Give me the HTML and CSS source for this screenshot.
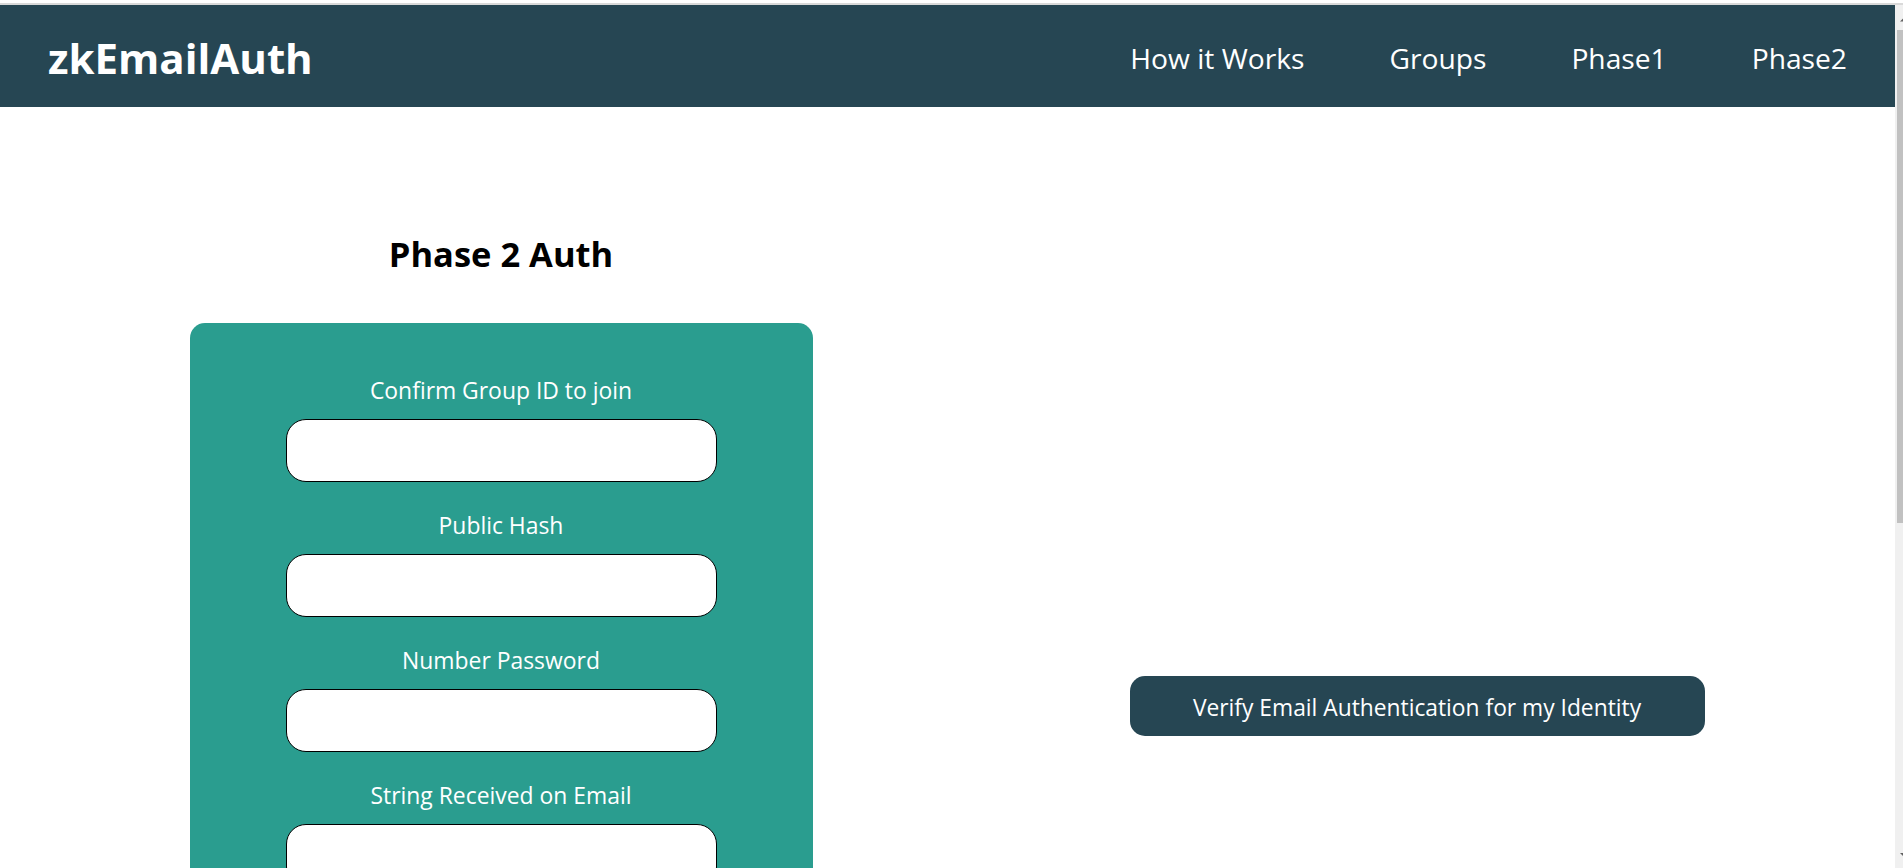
FILE: index.html
```html
<!DOCTYPE html>
<html lang="en">
<head>
<meta charset="utf-8">
<title>zkEmailAuth - Phase 2</title>
<link rel="stylesheet" href="styles.css">
</head>
<body>
<div class="topline"></div>
<div class="window">
  <div class="page">
    <header class="nav">
      <div class="logo">zkEmailAuth</div>
      <nav class="links">
        <a class="link" href="#">How it Works</a>
        <a class="link" href="#">Groups</a>
        <a class="link" href="#">Phase1</a>
        <a class="link" href="#">Phase2</a>
      </nav>
    </header>
    <main class="main">
      <section class="left">
        <h2 class="title">Phase 2 Auth</h2>
        <form class="card">
          <div class="field">
            <label class="label">Confirm Group ID to join</label>
            <input class="input" type="text">
          </div>
          <div class="field">
            <label class="label">Public Hash</label>
            <input class="input" type="text">
          </div>
          <div class="field">
            <label class="label">Number Password</label>
            <input class="input" type="text">
          </div>
          <div class="field">
            <label class="label">String Received on Email</label>
            <input class="input" type="text">
          </div>
        </form>
      </section>
      <section class="right">
        <button class="verify" type="button">Verify Email Authentication for my Identity</button>
      </section>
    </main>
  </div>
  <svg class="scrollbar" width="8" height="863" viewBox="0 0 8 863">
    <rect x="0" y="0" width="8" height="863" fill="#f0f0f0"/>
    <rect x="2" y="25" width="6" height="493" fill="#c1c1c1"/>
    <polygon points="5,16.5 8.5,13 12,16.5" fill="#606060"/>
    <polygon points="5,848 8.5,851.5 12,848" fill="#606060"/>
  </svg>
</div>
</body>
</html>
```

FILE: styles.css
```css
html, body {
  margin: 0;
  padding: 0;
  height: 100%;
  overflow: hidden;
  background: #ffffff;
}

body {
  font-family: "Open Sans", "Noto Sans", "Liberation Sans", sans-serif;
  color: #000;
}

.topline {
  height: 3px;
  background: #ffffff;
  border-bottom: 2px solid #d9d9d9;
}

.window {
  display: flex;
  height: 863px;
}

.page {
  flex: 1;
  min-width: 0;
  overflow: hidden;
}

.scrollbar {
  flex: none;
  display: block;
}

.nav {
  box-sizing: border-box;
  height: 102px;
  background: #264653;
  display: flex;
  align-items: center;
  justify-content: space-between;
  padding: 4px 48px 0 48px;
}

.logo {
  color: #ffffff;
  font-weight: 700;
  font-size: 42px;
  line-height: 50px;
}

.links {
  display: flex;
  gap: 85px;
}

.link {
  color: #ffffff;
  text-decoration: none;
  font-size: 28.2px;
  line-height: 40px;
}

.main {
  display: grid;
  grid-template-columns: 916px 916px;
  padding-left: 43px;
}

.left {
  display: flex;
  flex-direction: column;
  align-items: center;
}

.title {
  margin: 127px 0 0;
  font-size: 34.5px;
  line-height: 40px;
  font-weight: 700;
}

.card {
  margin-top: 49px;
  width: 623px;
  background: #2a9d8f;
  border-radius: 15px;
  padding: 54px 0 54px;
  display: flex;
  flex-direction: column;
  align-items: center;
  box-sizing: border-box;
}

.field {
  display: flex;
  flex-direction: column;
  align-items: center;
}

.label {
  color: #ffffff;
  font-size: 22.9px;
  line-height: 28px;
}

.input {
  box-sizing: border-box;
  width: 431px;
  height: 63px;
  margin: 14px 0 30px;
  border: 1px solid #000;
  border-radius: 20px;
  background: #ffffff;
  outline: none;
}

.right {
  display: flex;
  flex-direction: column;
  align-items: center;
}

.verify {
  box-sizing: border-box;
  margin-top: 569px;
  width: 575px;
  height: 60px;
  padding: 3px 0 0;
  border: none;
  border-radius: 15px;
  background: #264653;
  color: #ffffff;
  font-family: "Open Sans", "Noto Sans", "Liberation Sans", sans-serif;
  font-size: 22.8px;
  cursor: pointer;
}
```
